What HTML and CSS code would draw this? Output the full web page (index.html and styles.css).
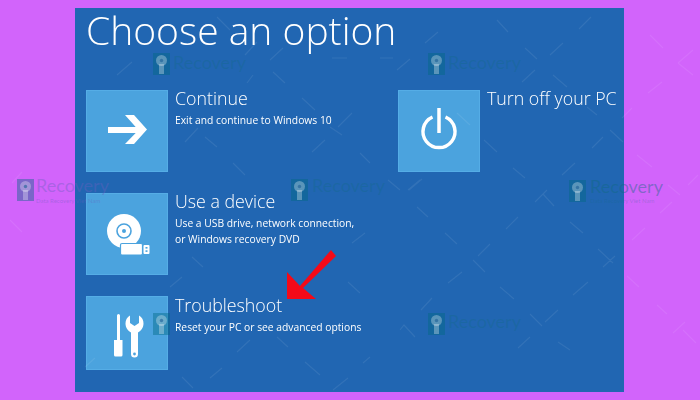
FILE: index.html
```html
<!DOCTYPE html>
<html lang="en">
<head>
<meta charset="utf-8">
<title>Choose an option</title>
<link rel="stylesheet" href="styles.css">
</head>
<body>
<main class="panel">
  <h1 class="title">Choose an option</h1>
  <div class="columns">
    <div class="column column-left">
      <section class="option">
        <div class="tile">
          <svg class="icon" viewBox="0 0 82 82"><path class="fill" d="M22 37H49.700L39 25H48L61 39.500L48 54H39L49.700 43H22Z"/></svg>
        </div>
        <div class="copy">
          <h2 class="name">Continue</h2>
          <p class="desc">Exit and continue to Windows 10</p>
        </div>
      </section>
      <section class="option">
        <div class="tile">
          <svg class="icon" viewBox="0 0 82 82">
            <circle class="fill" cx="38" cy="38" r="17"/>
            <circle class="ring" cx="38" cy="38" r="7"/>
            <circle class="hole" cx="38" cy="38" r="2"/>
            <rect class="fill outlined" x="34.500" y="50.500" width="22" height="11.500" rx="1.500"/>
            <rect class="fill" x="57.500" y="52" width="6" height="9" rx="1"/>
            <rect class="hole" x="59.500" y="54" width="2" height="1.600"/>
            <rect class="hole" x="59.500" y="57.300" width="2" height="1.600"/>
          </svg>
        </div>
        <div class="copy">
          <h2 class="name">Use a device</h2>
          <p class="desc">Use a USB drive, network connection,<br>or Windows recovery DVD</p>
        </div>
      </section>
      <section class="option option-short">
        <div class="tile">
          <svg class="icon" viewBox="0 0 82 74">
            <path class="fill" d="M31 19.500a1.500 1.500 0 0 1 3 0V44H31ZM28 44H36.500V59a1.500 1.500 0 0 1-1.500 1.500H29.500a1.500 1.500 0 0 1-1.500-1.500Z"/>
            <path class="fill" d="M44 19.500V27L48.500 30L53 27V19.500C56 21 57.500 24 57.500 27.500C57.500 31.500 55 35 52 36.500V58a3.500 3.500 0 0 1-7 0V36.500C42 35 39.500 31.500 39.500 27.500C39.500 24 41 21 44 19.500Z"/>
            <circle class="hole" cx="48.500" cy="58" r="1.400"/>
          </svg>
        </div>
        <div class="copy copy-low">
          <h2 class="name">Troubleshoot</h2>
          <p class="desc">Reset your PC or see advanced options</p>
        </div>
      </section>
    </div>
    <div class="column">
      <section class="option">
        <div class="tile">
          <svg class="icon" viewBox="0 0 82 82">
            <path class="power" d="M34.500 27A16 16 0 1 0 47.500 27"/>
            <path class="power" d="M41 18V43"/>
          </svg>
        </div>
        <div class="copy">
          <h2 class="name">Turn off your PC</h2>
        </div>
      </section>
    </div>
  </div>
</main>

<svg class="overlay" viewBox="0 0 700 400" aria-hidden="true">
  <defs>
    <g id="key">
      <rect class="wm-box" width="17" height="22"/>
      <circle class="wm-key" cx="8.500" cy="7.500" r="5.500"/>
      <rect class="wm-key" x="6" y="11" width="5" height="10"/>
      <circle class="wm-dot" cx="8.500" cy="7.500" r="1.700"/>
    </g>
  </defs>
  <path class="wm-lines" d="M117 75L132 62M217 17L230 30M245 55L257 42M270 60L283 48M273 72L285 83M247 83L253 75M185 142L198 128M205 137L217 147M302 98L315 110M338 127L352 113M330 127L342 135M312 152L325 140M233 163L245 175M360 153L370 163M332 58H347M380 58H393M409 190L422 179M417 207L428 217M445 233L457 244M478 256L490 244M473 260L485 272M448 283L462 272M506 229L518 217M535 202L547 190M543 194L554 206M570 222L583 233M598 249L613 263M603 267L615 256M500 287L514 299M573 295L588 282M421 310L432 298M530 314L542 326M545 322L558 310M518 348L530 337M558 342L570 350M400 330L404 325L415 337M668 185L680 195M660 213L672 202M632 240L645 228M627 276L639 287M657 305L667 314M673 333L685 322M683 330L696 343M497 20L508 32M579 29L591 17M425 43L438 32M525 48L537 59M550 55L563 43M397 70L410 59M522 82L535 70M553 75L567 87M457 113L470 125M587 107L597 115M622 118L632 108M610 130L623 142M592 148L603 137M637 155L652 167M650 35L663 48M678 63L693 50M678 63L693 75M648 93L662 82M688 185L698 175M484 140L497 152M562 175L575 163M513 168L525 178M388 180L400 190M408 190L420 180M192 257L203 267M170 287L182 277M348 282L360 293M352 243L365 233M237 352L250 340M277 337L288 347M305 362L320 375M333 390L348 378M182 377L193 388M210 378L222 368M363 363L370 357M85 367L95 358M12 183L22 172M10 220L22 232"/>
  <use href="#key" x="153" y="53"/>
  <use href="#key" x="428" y="53"/>
  <use href="#key" x="17" y="179"/>
  <use href="#key" x="291" y="179"/>
  <use href="#key" x="569" y="180"/>
  <use href="#key" x="428" y="313"/>
  <use href="#key" x="153" y="313"/>
  <text class="wm-text wm-faint" x="173" y="69">Recovery</text>
  <text class="wm-text wm-faint" x="448" y="69">Recovery</text>
  <text class="wm-text wm-pink-text" x="36" y="192">Recovery</text>
  <text class="wm-text wm-faint" x="312" y="192">Recovery</text>
  <text class="wm-text" x="590" y="193">Recovery</text>
  <text class="wm-text wm-faint" x="448" y="328">Recovery</text>
  <text class="wm-sub wm-pink-text" x="36" y="203">Data Recovery Viet Nam</text>
  <text class="wm-sub" x="590" y="203">Data Recovery Viet Nam</text>
  <path class="arrow" d="M287 299L287 272L300 286L331 250L336 256L303 288L316 299Z"/>
</svg>
</body>
</html>
```

FILE: styles.css
```css
* { box-sizing: border-box; }

html, body {
  margin: 0;
  height: 100%;
}

body {
  position: relative;
  width: 700px;
  height: 400px;
  padding: 8px 76px 8px 75px;
  background: #d264fb;
  overflow: hidden;
  font-family: "Open Sans", "Liberation Sans", sans-serif;
  color: #fff;
}

.panel {
  height: 384px;
  padding: 0 0 0 11px;
  background: #2166b2;
}

.title {
  margin: 0;
  height: 82px;
  font-size: 39px;
  line-height: 44px;
  font-weight: 300;
  white-space: nowrap;
  filter: blur(0.3px);
}

.columns {
  display: flex;
}

.column {
  display: flex;
  flex-direction: column;
}

.column-left {
  width: 312px;
  gap: 21px;
}

.option {
  display: flex;
  gap: 7px;
}

.tile {
  flex: none;
  width: 82px;
  height: 82px;
  background: #4ba3de;
  box-shadow: inset 0 0 0 1px #55ade6;
}

.option-short .tile {
  height: 74px;
}

.icon {
  display: block;
  width: 100%;
  height: 100%;
}

.fill { fill: #fff; }
.hole { fill: #4ba3de; }
.ring { fill: none; stroke: #4ba3de; stroke-width: 1.600; }
.outlined { stroke: #4ba3de; stroke-width: 1.200; }
.power { fill: none; stroke: #fff; stroke-width: 3.500; }

.copy {
  filter: blur(0.3px);
}

.copy-low {
  padding-top: 1px;
}

.name {
  margin: 0;
  font-size: 17.800px;
  line-height: 16px;
  font-weight: 300;
  white-space: nowrap;
}

.desc {
  margin: 6px 0 0;
  font-size: 10.300px;
  line-height: 16px;
  font-weight: 400;
  white-space: nowrap;
}

.overlay {
  position: absolute;
  left: 0;
  top: 0;
  width: 700px;
  height: 400px;
  pointer-events: none;
}

.wm-lines {
  fill: none;
  stroke: #fff;
  stroke-opacity: 0.08;
  stroke-width: 1.200;
}

.wm-box { fill: #006a80; fill-opacity: 0.42; }
.wm-key { fill: #fff; fill-opacity: 0.3; }
.wm-dot { fill: #1c5f96; fill-opacity: 0.6; }

.wm-text {
  font-family: "Lato", sans-serif;
  font-size: 18px;
  fill: #0f6a80;
  fill-opacity: 0.42;
}

.wm-faint {
  fill-opacity: 0.28;
}

.wm-sub {
  font-family: "Lato", sans-serif;
  font-size: 6px;
  fill: #0f6a80;
  fill-opacity: 0.25;
}

.wm-pink-text {
  fill: #6a5fc0;
  fill-opacity: 0.4;
}

.arrow { fill: #f40a18; }
```
